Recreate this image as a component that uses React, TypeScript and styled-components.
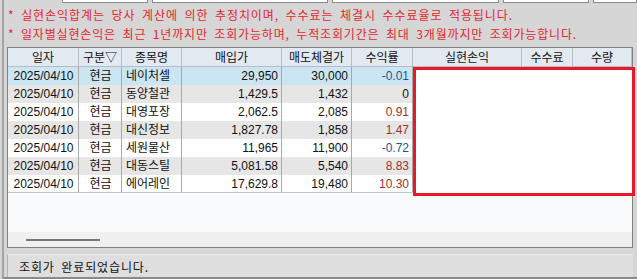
import { useLayoutEffect, useRef } from "react";
import styled, { createGlobalStyle } from "styled-components";

const GlobalStyle = createGlobalStyle`
  html, body {
    margin: 0;
    padding: 0;
    background: #d6d6d6;
  }
  * {
    box-sizing: border-box;
  }
`;

const Window = styled.div`
  width: 637px;
  height: 279px;
  overflow: hidden;
  background: #d6d6d6;
  padding-left: 2px;
  font-family: "Liberation Sans", "Noto Sans CJK KR", sans-serif;
`;

const Frame = styled.div`
  height: 100%;
  border-left: 2px solid #a4a4a4;
  border-bottom: 2px solid #8a8a8a;
  display: flex;
  flex-direction: column;
`;

const InputStrip = styled.div`
  height: 3px;
  display: flex;
  gap: 4px;
  padding-left: 58px;
`;

const InputBox = styled.div<{ $w: number }>`
  width: ${(p) => p.$w}px;
  height: 3px;
  background: #ffffff;
  border: 1px solid #8a8a8a;
  border-top: none;
`;

const Notice = styled.div`
  padding: 2px 0 0 4px;
  display: flex;
  flex-direction: column;
`;

const NoticeLine = styled.div`
  height: 19px;
  line-height: 19px;
  font-family: "Noto Sans CJK KR", sans-serif;
  font-size: 12px;
  color: #e4262e;
  white-space: nowrap;
`;

const FitSpan = styled.span`
  display: inline-block;
  white-space: nowrap;
  word-spacing: 3px;
`;

// stretches a line of text to the width it has in the screenshot (Gulim is wider than Noto)
const FitText = ({ text, width }: { text: string; width: number }) => {
  const ref = useRef<HTMLSpanElement>(null);
  useLayoutEffect(() => {
    const el = ref.current;
    if (!el) return;
    el.style.letterSpacing = "0px";
    const natural = el.getBoundingClientRect().width;
    el.style.letterSpacing = `${(width - natural) / text.length}px`;
  }, [text, width]);
  return <FitSpan ref={ref}>{text}</FitSpan>;
};

const TableBox = styled.div`
  position: relative;
  margin: 4px 4px 0 3px;
  height: 201px;
  border: 1px solid #808080;
  background: #f9fafc;
  display: flex;
  flex-direction: column;
`;

const cols = "71px 43px 60px 100px 70px 61px 109px 51px 59px";

const HeaderRow = styled.div`
  display: grid;
  grid-template-columns: ${cols};
  height: 19px;
  background: #e2e9f1;
  border-bottom: 1px solid #b4bcc6;
`;

const HeaderCell = styled.div`
  border-right: 1px solid #b8bec6;
  font-family: "Noto Sans CJK KR", sans-serif;
  font-size: 12px;
  line-height: 18px;
  text-align: center;
  color: #111;
  white-space: nowrap;
`;

const Row = styled.div<{ $bg: string; $last?: boolean }>`
  display: grid;
  grid-template-columns: ${cols};
  height: 18px;
  background: ${(p) => p.$bg};
  border-bottom: ${(p) => (p.$last ? "1px solid #c4c4c4" : "none")};
`;

const Cell = styled.div<{ $align?: string; $color?: string }>`
  border-right: 1px solid #a8a8a8;
  font-size: 12px;
  line-height: 18px;
  padding: 0 3px 0 4px;
  text-align: ${(p) => p.$align || "left"};
  color: ${(p) => p.$color || "#111"};
  white-space: nowrap;
  overflow: hidden;
`;

const EmptyArea = styled.div`
  flex: 1;
  background: #f9fafc;
`;

const ScrollArea = styled.div`
  height: 15px;
  background: #f0f0f0;
  padding: 7px 0 0 18px;
`;

const ScrollThumb = styled.div`
  width: 74px;
  height: 2px;
  background: #767676;
`;

const Highlight = styled.div`
  position: absolute;
  left: 405px;
  top: 19px;
  width: 222px;
  height: 129px;
  border: 3px solid #e8192c;
  background: #ffffff;
`;

const StatusBar = styled.div`
  margin: 6px 4px 0 3px;
  flex: 1;
  border-top: 1px solid #eaeaea;
  border-left: 1px solid #b4b4b4;
  background: #dedede;
  display: flex;
  align-items: center;
  gap: 6px;
  padding-left: 3px;
`;

const Grip = styled.div`
  width: 2px;
  height: 11px;
  background-image: radial-gradient(#9a9a9a 45%, transparent 50%);
  background-size: 2px 2px;
`;

const StatusText = styled.span`
  font-family: "Noto Sans CJK KR", sans-serif;
  font-size: 12px;
  color: #111;
`;

const headers = ["일자", "구분▽", "종목명", "매입가", "매도체결가", "수익률", "실현손익", "수수료", "수량"];

type Trade = { name: string; buy: string; sell: string; rate: string };

const trades: Trade[] = [
  { name: "네이처셀", buy: "29,950", sell: "30,000", rate: "-0.01" },
  { name: "동양철관", buy: "1,429.5", sell: "1,432", rate: "0" },
  { name: "대영포장", buy: "2,062.5", sell: "2,085", rate: "0.91" },
  { name: "대신정보", buy: "1,827.78", sell: "1,858", rate: "1.47" },
  { name: "세원물산", buy: "11,965", sell: "11,900", rate: "-0.72" },
  { name: "대동스틸", buy: "5,081.58", sell: "5,540", rate: "8.83" },
  { name: "에어레인", buy: "17,629.8", sell: "19,480", rate: "10.30" },
];

const rateColor = (r: string) => {
  const v = parseFloat(r);
  if (v < 0) return "#24548f";
  if (v > 0) return "#a3302c";
  return "#111";
};

const rowBg = (i: number) => (i === 0 ? "#cbe6f2" : i % 2 === 1 ? "#e6e6e6" : "#ffffff");

export default function App() {
  return (
    <>
      <GlobalStyle />
      <Window>
        <Frame>
          <InputStrip>
            <InputBox $w={86} />
            <InputBox $w={176} />
            <InputBox $w={168} />
            <InputBox $w={86} />
            <InputBox $w={44} />
          </InputStrip>
          <Notice>
            <NoticeLine>
              <FitText width={505} text="* 실현손익합계는 당사 계산에 의한 추정치이며, 수수료는 체결시 수수료율로 적용됩니다." />
            </NoticeLine>
            <NoticeLine>
              <FitText width={569} text="* 일자별실현손익은 최근 1년까지만 조회가능하며, 누적조회기간은 최대 3개월까지만 조회가능합니다." />
            </NoticeLine>
          </Notice>
          <TableBox>
            <HeaderRow>
              {headers.map((h) => (
                <HeaderCell key={h}>{h}</HeaderCell>
              ))}
            </HeaderRow>
            {trades.map((t, i) => (
              <Row key={t.name} $bg={rowBg(i)} $last={i === trades.length - 1}>
                <Cell $align="center">2025/04/10</Cell>
                <Cell $align="center">현금</Cell>
                <Cell>{t.name}</Cell>
                <Cell $align="right">{t.buy}</Cell>
                <Cell $align="right">{t.sell}</Cell>
                <Cell $align="right" $color={rateColor(t.rate)}>
                  {t.rate}
                </Cell>
                <Cell />
                <Cell />
                <Cell />
              </Row>
            ))}
            <EmptyArea />
            <ScrollArea>
              <ScrollThumb />
            </ScrollArea>
            <Highlight />
          </TableBox>
          <StatusBar>
            <Grip />
            <StatusText>
              <FitText width={130} text="조회가 완료되었습니다." />
            </StatusText>
          </StatusBar>
        </Frame>
      </Window>
    </>
  );
}
